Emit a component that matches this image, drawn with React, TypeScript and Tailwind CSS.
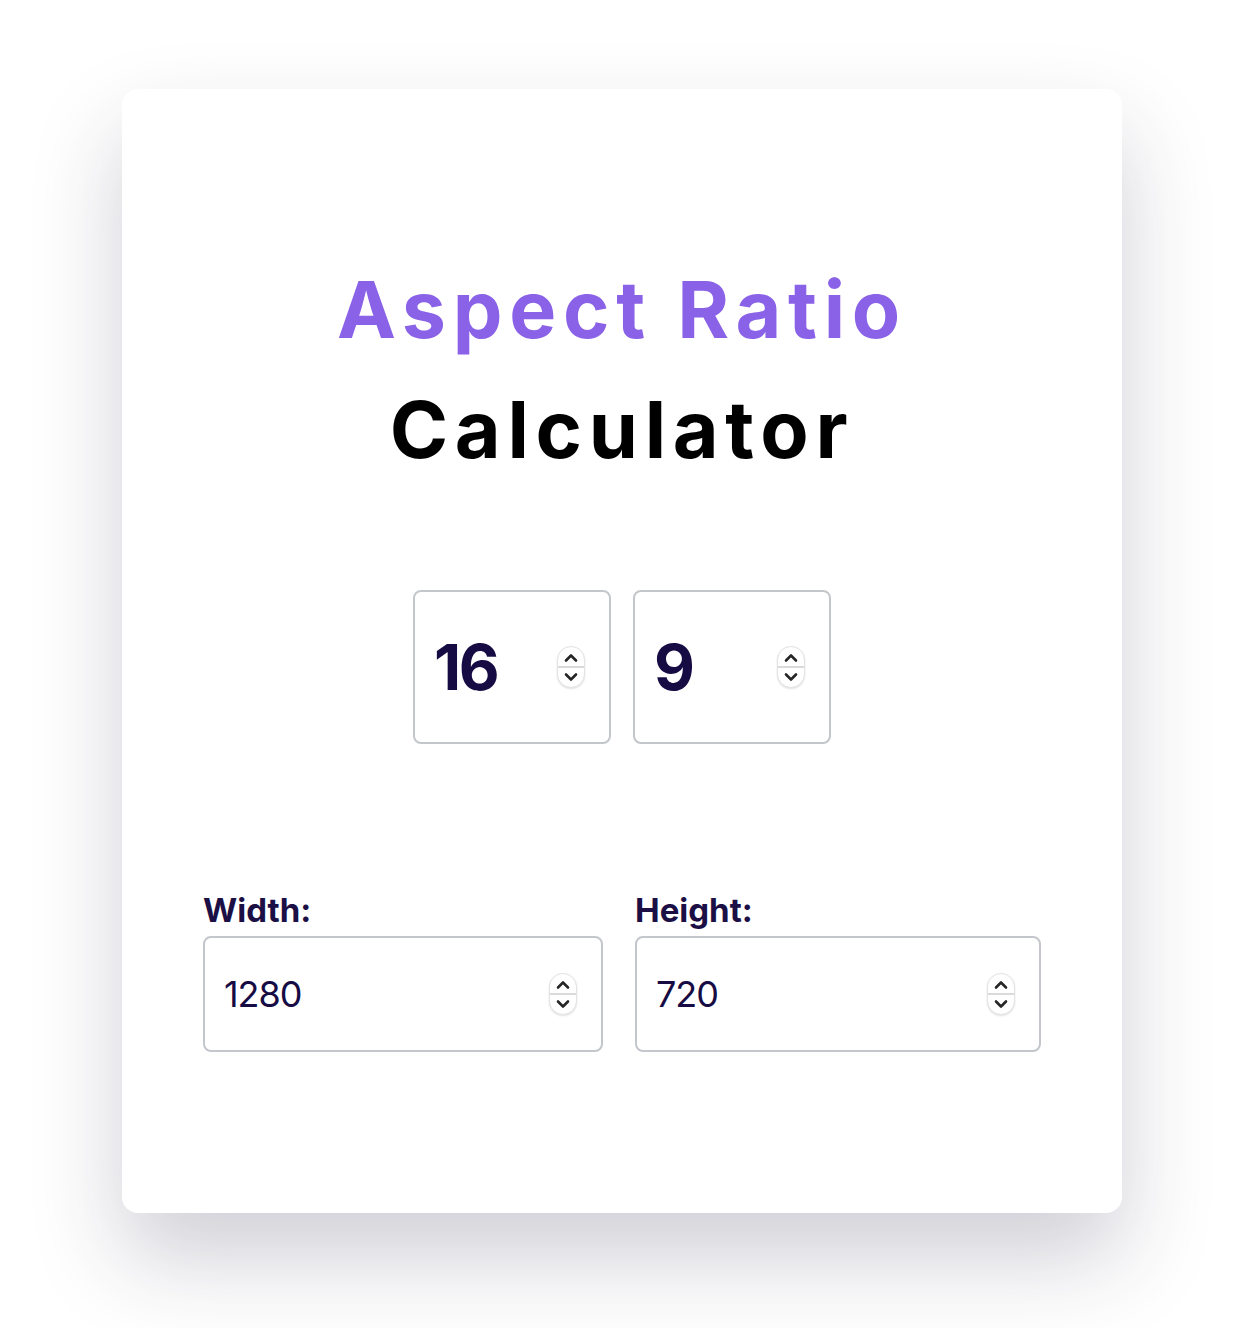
import { useState } from "react";

const font = { fontFamily: "Inter, 'Noto Sans', sans-serif" };

function Spinner({ onUp, onDown }: { onUp: () => void; onDown: () => void }) {
  return (
    <div className="flex h-[42px] w-[28px] shrink-0 flex-col overflow-hidden rounded-full border border-[#e3e3e3] bg-white shadow-[0_1px_2px_rgba(0,0,0,0.12)]">
      <button onClick={onUp} className="flex flex-1 items-center justify-center border-b-2 border-[#dadada] pt-[2px]">
        <svg width="16" height="10" viewBox="0 0 16 10" fill="none">
          <path d="M3 7.5l5-5 5 5" stroke="#262626" strokeWidth="2.6" strokeLinecap="round" strokeLinejoin="round" />
        </svg>
      </button>
      <button onClick={onDown} className="flex flex-1 items-center justify-center pb-[2px]">
        <svg width="16" height="10" viewBox="0 0 16 10" fill="none">
          <path d="M3 2.5l5 5 5-5" stroke="#262626" strokeWidth="2.6" strokeLinecap="round" strokeLinejoin="round" />
        </svg>
      </button>
    </div>
  );
}

function NumberField({
  value,
  onChange,
  className,
  inputClass,
}: {
  value: number;
  onChange: (v: number) => void;
  className: string;
  inputClass: string;
}) {
  return (
    <div className={`flex items-center rounded-lg border-2 border-[#c3c6cb] bg-white pr-[24px] ${className}`}>
      <input
        value={value}
        onChange={(e) => onChange(Number(e.target.value.replace(/\D/g, "")) || 0)}
        inputMode="numeric"
        className={`min-w-0 flex-1 bg-transparent text-[#170b44] outline-none ${inputClass}`}
        style={font}
      />
      <Spinner onUp={() => onChange(value + 1)} onDown={() => onChange(Math.max(0, value - 1))} />
    </div>
  );
}

export default function App() {
  const [ratioW, setRatioW] = useState(16);
  const [ratioH, setRatioH] = useState(9);
  const [width, setWidth] = useState(1280);
  const [height, setHeight] = useState(720);

  // Keep the pixel dimensions tied to the ratio.
  const changeWidth = (v: number) => {
    setWidth(v);
    if (ratioW) setHeight(Math.round((v * ratioH) / ratioW));
  };
  const changeHeight = (v: number) => {
    setHeight(v);
    if (ratioH) setWidth(Math.round((v * ratioW) / ratioH));
  };

  return (
    <div className="min-h-[1328px] bg-white pl-[122px] pt-[89px]" style={font}>
      <div className="flex h-[1124px] w-[1000px] flex-col items-center rounded-2xl bg-white px-[81px] pt-[160px] shadow-[0_45px_90px_rgba(40,36,70,0.22)]">
        <h1 className="text-center text-[79px] font-bold leading-[120px] tracking-[0.085em]">
          <span className="block text-[#8a62e8]">Aspect Ratio</span>
          <span className="block text-black">Calculator</span>
        </h1>

        <div className="mt-[101px] flex gap-[22px]">
          <NumberField
            value={ratioW}
            onChange={setRatioW}
            className="h-[154px] w-[198px]"
            inputClass="pl-[19px] text-[63px] font-bold tracking-[-0.04em]"
          />
          <NumberField
            value={ratioH}
            onChange={setRatioH}
            className="h-[154px] w-[198px]"
            inputClass="pl-[19px] text-[63px] font-bold tracking-[-0.04em]"
          />
        </div>

        <div className="mt-[150px] flex w-full gap-[32px]">
          <label className="flex w-[400px] flex-col">
            <span className="mb-[10px] text-[33px] font-bold leading-[32px] text-[#1b0f45]">Width:</span>
            <NumberField
              value={width}
              onChange={changeWidth}
              className="h-[116px] w-full"
              inputClass="pl-[19px] text-[36px] tracking-[-0.03em]"
            />
          </label>
          <label className="flex w-[406px] flex-col">
            <span className="mb-[10px] text-[33px] font-bold leading-[32px] text-[#1b0f45]">Height:</span>
            <NumberField
              value={height}
              onChange={changeHeight}
              className="h-[116px] w-full"
              inputClass="pl-[19px] text-[36px] tracking-[-0.03em]"
            />
          </label>
        </div>
      </div>
    </div>
  );
}
